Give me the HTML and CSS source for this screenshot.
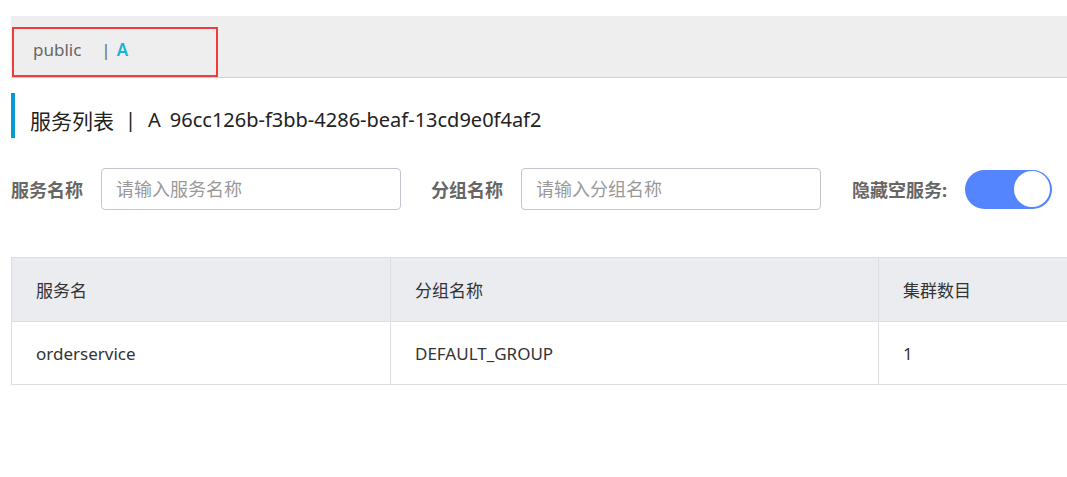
FILE: index.html
```html
<!DOCTYPE html>
<html lang="zh">
<head>
<meta charset="utf-8">
<title>服务列表</title>
<link rel="stylesheet" href="styles.css">
</head>
<body>
<div class="page">
  <div class="nsbar">
    <div class="crumbs">
      <span class="ns">public</span>
      <span class="sep">|</span>
      <span class="cur">A</span>
    </div>
  </div>

  <h1 class="title"><span class="t-main">服务列表</span><span class="t-sep">|</span><span class="t-ns">A</span><span class="t-id">96cc126b-f3bb-4286-beaf-13cd9e0f4af2</span></h1>

  <div class="filters">
    <label class="flabel">服务名称</label>
    <input class="finput" type="text" placeholder="请输入服务名称">
    <label class="flabel second">分组名称</label>
    <input class="finput" type="text" placeholder="请输入分组名称">
    <label class="flabel third">隐藏空服务:</label>
    <div class="toggle"><span class="knob"></span></div>
  </div>

  <table class="grid">
    <colgroup>
      <col class="c1"><col class="c2"><col class="c3">
    </colgroup>
    <thead>
      <tr><th>服务名</th><th>分组名称</th><th>集群数目</th></tr>
    </thead>
    <tbody>
      <tr><td>orderservice</td><td>DEFAULT_GROUP</td><td>1</td></tr>
    </tbody>
  </table>
</div>
</body>
</html>
```
FILE: styles.css
```css
html, body {
  margin: 0;
  padding: 0;
  background: #fff;
  overflow: hidden;
}
body {
  font-family: "Noto Sans", "Noto Sans CJK SC", sans-serif;
  color: #333;
}
.page {
  padding: 16px 0 0 11px;
  width: 1300px;
}
.nsbar {
  background: #eeeeee;
  height: 62px;
  border-bottom: 1px solid #d0d0d0;
  box-sizing: border-box;
  padding-top: 11px;
}
.crumbs {
  margin-left: 1px;
  width: 206px;
  height: 50px;
  box-sizing: border-box;
  border: 2px solid #f03c3c;
  display: flex;
  align-items: center;
  padding: 0 0 5px 19px;
  font-size: 17px;
}
.ns { color: #666; }
.sep { color: #666; margin-left: 20px; }
.cur { color: #1ab3d6; font-weight: 600; margin-left: 6px; }

.title {
  margin: 15px 0 0 0;
  height: 45px;
  border-left: 4px solid #0a9ad0;
  padding: 8px 0 0 15px;
  box-sizing: border-box;
  display: flex;
  align-items: center;
  font-size: 20px;
  font-weight: 400;
  color: #222;
  white-space: pre;
}
.t-main { font-size: 21px; }
.t-sep { margin-left: 11px; }
.t-ns { margin-left: 12px; }
.t-id { margin-left: 9px; }

.filters {
  margin-top: 30px;
  display: flex;
  align-items: center;
  height: 42px;
}
.flabel {
  font-size: 18px;
  font-weight: 700;
  color: #666;
  margin-right: 18px;
}
.flabel.second { margin-left: 30px; }
.flabel.third { margin-left: 31px; margin-right: 18px; }
.finput {
  width: 300px;
  height: 42px;
  box-sizing: border-box;
  border: 1px solid #c4c6cf;
  border-radius: 4px;
  padding: 0 14px;
  font-family: inherit;
  font-size: 18px;
  color: #333;
  outline: none;
}
.finput::placeholder { color: #999; }
.toggle {
  width: 87px;
  height: 39px;
  border-radius: 20px;
  background: #5584ff;
  display: flex;
  align-items: center;
  justify-content: flex-end;
  padding-right: 2px;
  box-sizing: border-box;
}
.knob {
  width: 36px;
  height: 36px;
  border-radius: 50%;
  background: #fff;
}

.grid {
  margin-top: 47px;
  border-collapse: collapse;
  table-layout: fixed;
  width: 1180px;
  font-size: 17px;
  border: 1px solid #dcdee3;
}
.c1 { width: 379px; }
.c2 { width: 488px; }
.grid th, .grid td {
  text-align: left;
  padding: 0 0 0 24px;
  border: 1px solid #dcdee3;
  font-weight: 400;
  color: #333;
}
.grid th {
  background: #ebecf0;
  height: 63px;
}
.grid td {
  height: 62px;
}
```
